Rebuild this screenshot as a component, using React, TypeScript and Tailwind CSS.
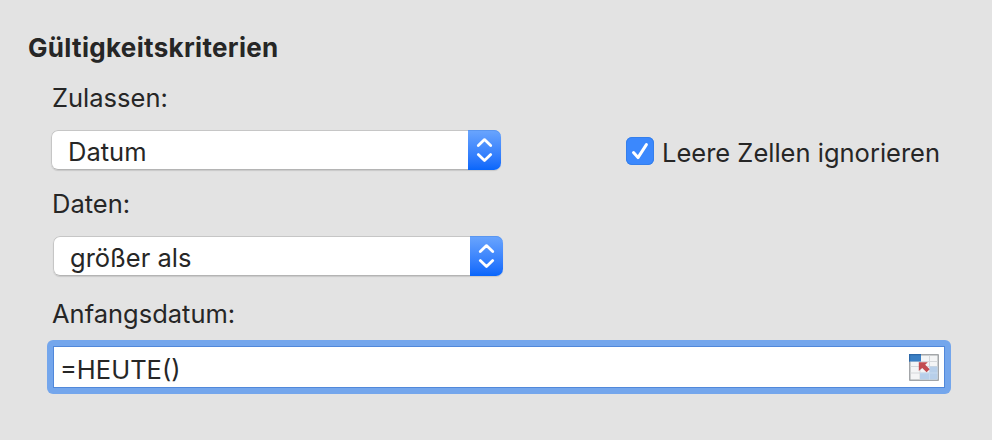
import React, { useState } from 'react';

const TEXT = 'whitespace-nowrap leading-[30px]';

const Stepper = () => (
  <span className="flex h-10 w-[33px] items-center justify-center rounded-r-[7px] bg-linear-to-b from-[#6aa5fd] to-[#0766fb] shadow-[inset_0_1px_0_#5a96f0]">
    <svg width="33" height="40" viewBox="0 0 33 40" fill="none" stroke="white" strokeWidth="2.8" strokeLinecap="round" strokeLinejoin="round">
      <path d="M10.3 15.5 16.5 9.6 22.7 15.5M10.3 24.6 16.5 30.5 22.7 24.6" />
    </svg>
  </span>
);

const Popup = ({ value, className }: { value: string; className: string }) => (
  <button className={`flex h-10 w-[450px] justify-between rounded-[7px] bg-white shadow-[0_1px_1px_rgba(0,0,0,0.12)] ${className}`}>
    <span className="flex h-10 flex-1 rounded-l-[7px] border border-r-0 border-[#c6c6c6] border-b-[#b4b4b4] pl-4 pt-[6px]">
      <span className={`${TEXT} text-[25.5px]`}>{value}</span>
    </span>
    <Stepper />
  </button>
);

// Range picker at the end of the formula field
const RangeIcon = () => (
  <svg width="30" height="27" viewBox="0 0 30 27">
    <rect x="0" y="0" width="30" height="27" rx="1" fill="#a3a6a9" />
    <rect x="1.5" y="1.5" width="27" height="24" fill="#f4f5f6" />
    <path d="M20.5 1.5v24M1.5 7.5h27M1.5 12.5h27M1.5 19h27M11 1.5v24" stroke="#d5d8db" strokeWidth="1" />
    <rect x="0" y="0" width="12" height="7.5" fill="#3a7fc4" />
    <path d="M0 .6h12M.6 0v7.5" stroke="#2d68a8" strokeWidth="1.2" />
    <path d="M20.5 12.5h8v13H11V19h9.5z" fill="#b7cfea" />
    <path d="M11 19h17.5M20.5 12.5v13" stroke="#c6daef" />
    <path d="M9.8 8.2h9l-2.6 2.6 4.5 4.4-3.1 3.1-4.4-4.4-3.4 3z" fill="#c24c50" />
  </svg>
);

const App = () => {
  const [ignoreBlank, setIgnoreBlank] = useState(true);

  return (
    <div className="h-[440px] w-[992px] bg-[#e3e3e3] pt-[33px] font-['Inter',sans-serif] text-[#262626]">
      <h1 className={`ml-7 font-bold ${TEXT} text-[26px] tracking-[0.32px]`}>Gültigkeitskriterien</h1>

      <div className={`ml-[52px] mt-5 ${TEXT} text-[25.5px]`}>Zulassen:</div>
      <div className="mt-[17px] flex">
        <Popup value="Datum" className="ml-[51px]" />
        <label className="ml-[125px] flex pt-[7px]">
          <input type="checkbox" className="sr-only" checked={ignoreBlank} onChange={() => setIgnoreBlank(!ignoreBlank)} />
          <span className="size-7 rounded-[6px] bg-[#3b88fd] shadow-[inset_0_0_0_1px_#347fec]">
            {ignoreBlank && (
              <svg width="28" height="28" viewBox="0 0 28 28" fill="none" stroke="white" strokeWidth="3" strokeLinecap="round" strokeLinejoin="round">
                <path d="M7.5 15.6 12 20.6 20.4 7.6" />
              </svg>
            )}
          </span>
          <span className={`ml-2 mt-px ${TEXT} text-[25.5px]`}>Leere Zellen ignorieren</span>
        </label>
      </div>

      <div className={`ml-[52px] mt-[19px] ${TEXT} text-[25.5px]`}>Daten:</div>
      <Popup value="größer als" className="ml-[53px] mt-[17px]" />

      <div className={`ml-[52px] mt-[23px] ${TEXT} text-[25.5px]`}>Anfangsdatum:</div>
      <div className="ml-[47px] mt-[11px] h-[54px] w-[904px] rounded-[6px] bg-[#74a6ec] p-[6px]">
        <div className="flex h-[42px] justify-between border border-[#5188da] bg-white pl-[6px] pr-[5px] pt-[7px]">
          <span className={`mt-px ${TEXT} text-[25.5px]`}>=HEUTE()</span>
          <RangeIcon />
        </div>
      </div>
    </div>
  );
};

export default App;
